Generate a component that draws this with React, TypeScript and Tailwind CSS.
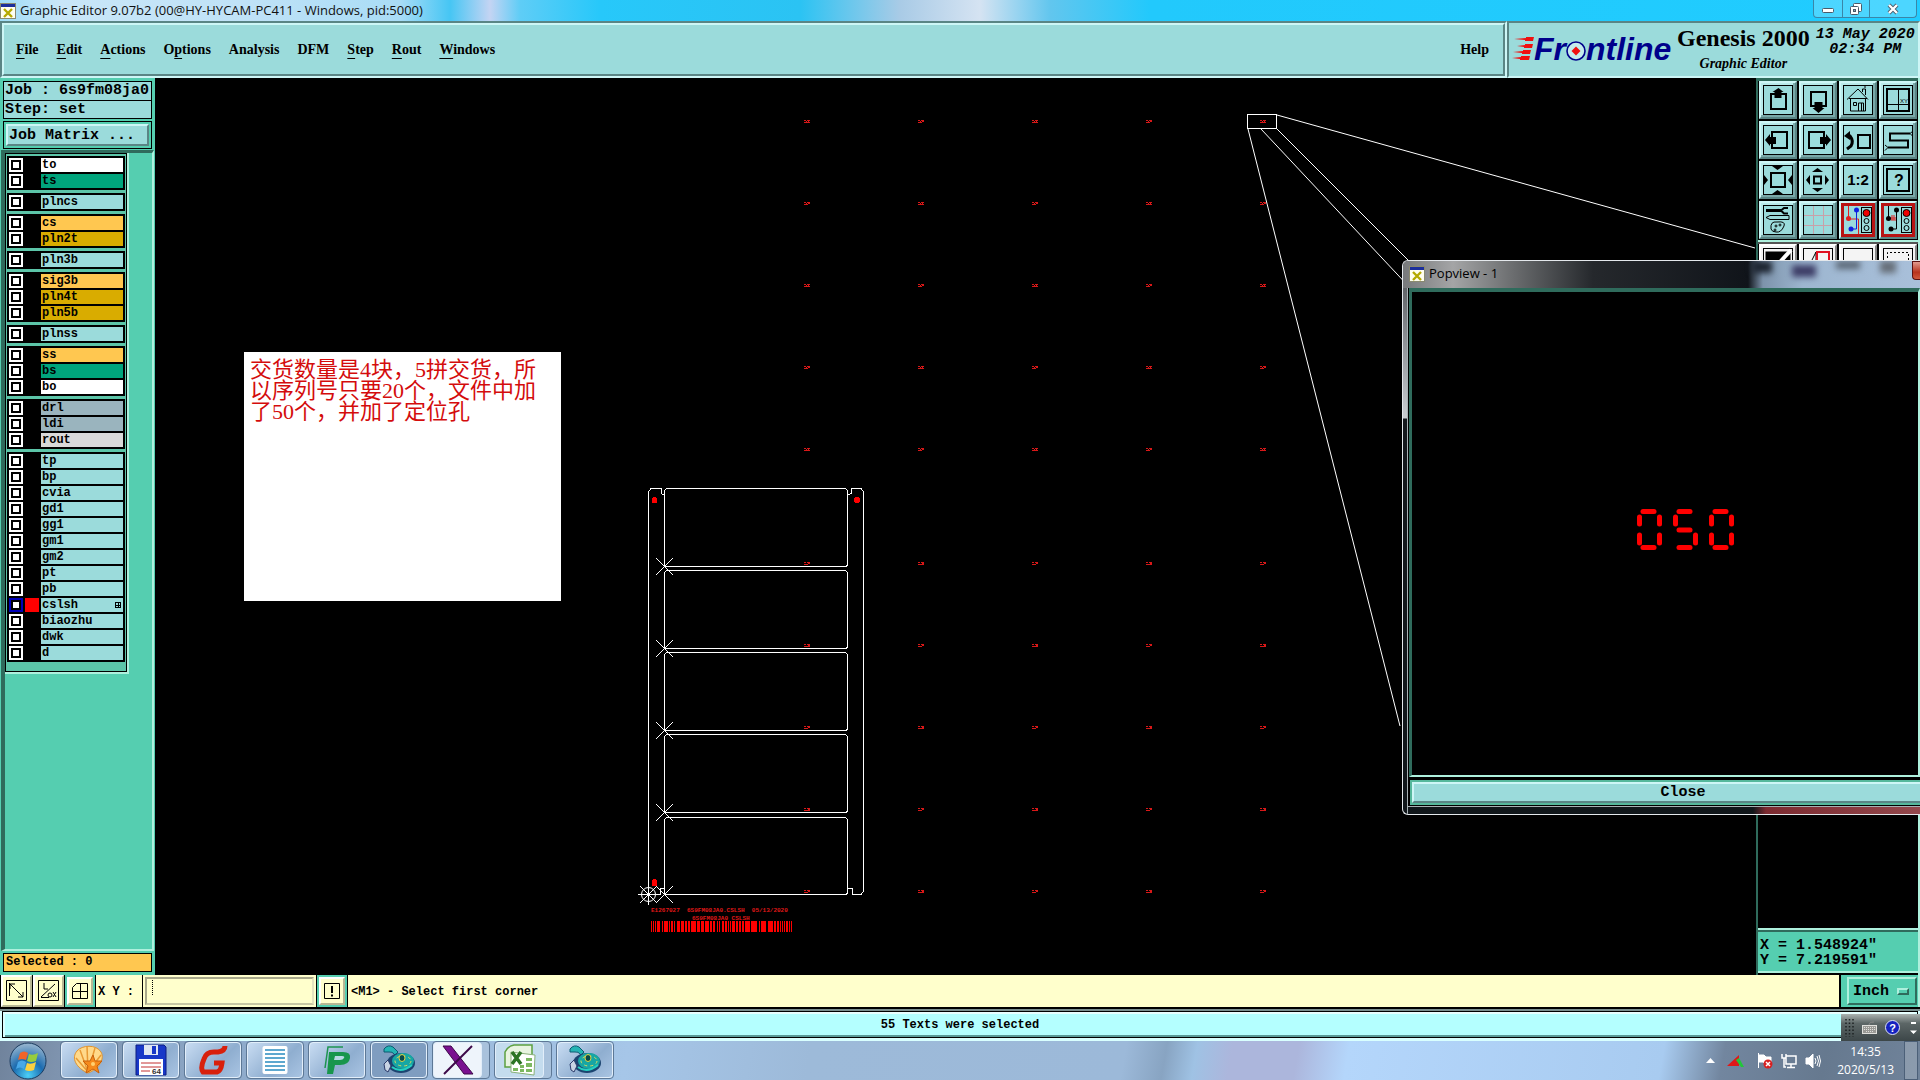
import React, { useState } from "react";

const raised =
  "border-2 border-t-[#cdf6f6] border-l-[#cdf6f6] border-b-[#5a8585] border-r-[#5a8585]";
const sunken =
  "border-2 border-t-[#5a8585] border-l-[#5a8585] border-b-[#cdf6f6] border-r-[#cdf6f6]";
const mono = "font-['Liberation_Mono',monospace]";
const serif = "font-['Liberation_Serif',serif]";
const ui = "font-['Open_Sans','Noto_Sans',sans-serif]";

type Layer = { name: string; color: string };

const AQUA = "bg-[#9bdbdb]";
const ORANGE = "bg-[#ffc750]";
const GOLD = "bg-[#d9ac00]";
const GREEN = "bg-[#00a47c]";
const WHITE = "bg-white";
const STEEL = "bg-[#9ab4be]";

const layerGroups: Layer[][] = [
  [
    { name: "to", color: WHITE },
    { name: "ts", color: GREEN },
  ],
  [{ name: "plncs", color: AQUA }],
  [
    { name: "cs", color: ORANGE },
    { name: "pln2t", color: GOLD },
  ],
  [{ name: "pln3b", color: AQUA }],
  [
    { name: "sig3b", color: ORANGE },
    { name: "pln4t", color: GOLD },
    { name: "pln5b", color: GOLD },
  ],
  [{ name: "plnss", color: AQUA }],
  [
    { name: "ss", color: ORANGE },
    { name: "bs", color: GREEN },
    { name: "bo", color: WHITE },
  ],
  [
    { name: "drl", color: STEEL },
    { name: "ldi", color: STEEL },
    { name: "rout", color: "bg-[#d9d9d9]" },
  ],
  ["tp", "bp", "cvia", "gd1", "gg1", "gm1", "gm2", "pt", "pb", "cslsh", "biaozhu", "dwk", "d"].map(
    (name) => ({ name, color: AQUA })
  ),
];

// [text before, underlined letter, text after]
const menus = [
  ["", "F", "ile"],
  ["", "E", "dit"],
  ["", "A", "ctions"],
  ["O", "p", "tions"],
  ["Analysis", "", ""],
  ["DFM", "", ""],
  ["", "S", "tep"],
  ["", "R", "out"],
  ["", "W", "indows"],
];

const XIcon: React.FC = () => (
  <svg width="16" height="16" viewBox="0 0 16 16" shapeRendering="crispEdges">
    <rect x="0.5" y="0.5" width="15" height="15" fill="#fffef0" stroke="#8a8a70" />
    <rect x="1" y="1" width="14" height="3" fill="#1c2f9c" />
    <path d="M4 6l8 8M12 6l-8 8" stroke="#b5a900" strokeWidth="2.4" shapeRendering="auto" />
  </svg>
);

const TitleBar: React.FC = () => (
  <div className="flex h-[21px] items-start justify-between overflow-hidden bg-[linear-gradient(90deg,#9fdcf6_0px,#c9e6f8_60px,#bfe2f7_250px,#a9dcf6_400px,#46c6f4_450px,#c4d4f3_490px,#5fcdf6_520px,#27c8fa_600px,#2bc3f3_800px,#a9cbe6_900px,#d5e3f2_980px,#62c6ee_1050px,#22c9fc_1150px,#20ccff_1900px)]">
    <div className={`flex h-[21px] items-center gap-1 pt-px text-[13px] text-[#111] ${ui}`}>
      <XIcon />
      <span>Graphic Editor 9.07b2 (00@HY-HYCAM-PC411 - Windows, pid:5000)</span>
    </div>
    <div className="mr-[3px] flex h-[18px] overflow-hidden rounded-b border border-t-0 border-[#3a86a8] bg-white/20">
      <button aria-label="Minimize" className="flex w-[29px] items-center justify-center border-r border-[#3a86a8]">
        <svg width="14" height="12"><rect x="1.5" y="5.5" width="11" height="4" rx="1" fill="#fff" stroke="#4a5a6a" /></svg>
      </button>
      <button aria-label="Restore" className="flex w-[27px] items-center justify-center border-r border-[#3a86a8]">
        <svg width="14" height="14" fill="#fff" stroke="#4a5a6a">
          <rect x="4.5" y="1.5" width="8" height="8" rx="1" />
          <rect x="1.5" y="4.5" width="8" height="8" rx="1" />
          <rect x="4.5" y="7.5" width="2" height="2" fill="#8ab" />
        </svg>
      </button>
      <button aria-label="Close window" className="flex w-[46px] items-center justify-center">
        <svg width="14" height="12">
          <path d="M3 2l8 8M11 2l-8 8" stroke="#4a5a6a" strokeWidth="4" />
          <path d="M3 2l8 8M11 2l-8 8" stroke="#fff" strokeWidth="2.4" />
        </svg>
      </button>
    </div>
  </div>
);

const Header: React.FC = () => (
  <header className="flex h-[57px] bg-[#9bdbdb] text-black">
    <div className={`flex flex-1 ${sunken}`}>
      <nav className={`flex flex-1 items-center justify-between pr-3.5 pl-3 text-[14px] font-bold ${serif} ${raised}`}>
        <div className="flex gap-[18px]">
          {menus.map(([pre, key, post]) => (
            <button key={pre + key + post} className="leading-4">
              {pre}
              <span className="underline decoration-1 underline-offset-4">{key}</span>
              {post}
            </button>
          ))}
        </div>
        <button className="leading-4">Help</button>
      </nav>
    </div>
    <div className={`flex w-[413px] items-start pl-[3px] ${sunken}`}>
      <div className="flex items-center pt-[10px] text-[32px] leading-8 font-bold italic text-[#00008b] font-['Liberation_Sans',sans-serif]">
        <svg width="22" height="32" viewBox="0 0 22 32" fill="#f01010">
          <path d="M2 6l12-1v-1h8l-1 4h-8v-1zM5 13l8-1v-1h8l-1 4h-8v-1zM1 19l10-1v-1h8l-1 4h-8v-1zM0 25l9-1v-1h9l-1 4h-9v-1z" />
        </svg>
        <span>Fr</span>
        <svg width="20" height="32" viewBox="0 0 20 32">
          <circle cx="10" cy="18" r="9" fill="#c4ecec" stroke="#00008b" strokeWidth="1.6" />
          <path d="M10 13.500l4.500 4.500-4.500 4.500-4.500-4.500z" fill="#f01010" />
        </svg>
        <span>ntline</span>
      </div>
      <div className={`ml-[3px] flex w-[138px] flex-col items-center font-bold ${serif}`}>
        <span className="pt-px text-[24px] leading-7">Genesis 2000</span>
        <span className="pt-1 text-[14px] leading-4 italic">Graphic Editor</span>
      </div>
      <div className={`flex flex-1 flex-col items-center pt-1 text-[15px] leading-[15px] font-bold italic ${mono}`}>
        <span>13 May 2020</span>
        <span>02:34 PM</span>
      </div>
    </div>
  </header>
);

const LayerRow: React.FC<{ layer: Layer }> = ({ layer }) => {
  const active = layer.name === "cslsh";
  const [checked, setChecked] = useState(active);
  const id = `layer-${layer.name}`;
  return (
    <div className="flex h-[14px] gap-0.5">
      <input
        id={id}
        type="checkbox"
        checked={checked}
        onChange={() => setChecked(!checked)}
        className="size-[14px] appearance-none border-2 border-white bg-white shadow-[inset_0_0_0_2px_#000] checked:border-[#0000b8]"
      />
      <span className={active ? "w-[14px] bg-[#ff0000]" : "w-[14px] bg-black"} />
      <label
        htmlFor={id}
        className={`flex flex-1 items-center justify-between pl-px text-[12px] leading-[14px] font-bold text-black ${layer.color}`}
      >
        {layer.name}
        {active && (
          <svg width="7" height="6" viewBox="0 0 7 6" shapeRendering="crispEdges" className="mr-px">
            <path d="M0.500 0.500h5v5h-5zM3 0v6M0 3h6" fill="none" stroke="#000" />
          </svg>
        )}
      </label>
    </div>
  );
};

const Sidebar: React.FC = () => (
  <aside className={`flex w-[155px] flex-col bg-[#55ceb0] px-[3px] pt-[3px] pb-[3px] text-[15px] font-bold text-black ${mono}`}>
    <div className="border border-black bg-[#9bdbdb] px-px leading-[18px] whitespace-nowrap">Job : 6s9fm08ja0</div>
    <div className="border border-t-0 border-black bg-[#9bdbdb] px-px leading-[17px]">Step: set</div>
    <div className="mt-0.5 border border-black p-0.5">
      <button className={`block h-[22px] w-full bg-[#9bdbdb] pt-px pl-px text-left leading-[17px] ${raised}`}>Job Matrix ...</button>
    </div>
    <div className="-mx-0.5 mt-px flex-1 border-t-[3px] border-r-2 border-b-2 border-l-4 border-t-[#2f6b5c] border-l-[#2f6b5c] border-r-[#aef0dd] border-b-[#aef0dd]">
      <div className="w-[124px] border-r-2 border-b-2 border-[#aef0dd]">
        <div className="flex flex-col gap-[3px] border border-black bg-[#5cc5a8] px-px pt-0.5 pb-[9px]">
          {layerGroups.map((group) => (
            <div key={group[0].name} className="flex flex-col gap-0.5 bg-black p-0.5">
              {group.map((l) => (
                <LayerRow key={l.name} layer={l} />
              ))}
            </div>
          ))}
        </div>
      </div>
    </div>
    <div className="mt-0.5 border border-black bg-[#ffc750] pl-0.5 text-[12px] leading-[17px]">Selected : 0</div>
  </aside>
);

const boards = [488.5, 570.5, 652.5, 734.5, 817.5];
const boardEnds = [566.5, 648.5, 730.5, 812.5, 894.5];
const serialCols = [804, 918, 1032, 1146, 1260];
const serialRows = [120, 202, 284, 366, 448, 562, 644, 726, 808, 890];
const bars = [
  1, 1, 1, 1, 1, 1, 3, 2, 1, 1, 4, 1, 1, 1, 2, 1, 1, 2, 3, 1, 3, 1, 2, 1, 2, 1, 5, 1, 3, 1, 3, 1, 4, 1, 2, 1, 2, 2, 1, 1, 1, 2, 2,
  1, 2, 1, 1, 1, 1, 1, 3, 1, 2, 1, 2, 1, 2, 1, 5, 1, 6, 2, 1, 1, 5, 2, 5, 1, 2, 1, 2, 1, 1, 1, 1, 1, 1, 1, 2, 1, 1, 1, 1,
];

const Barcode: React.FC = () => {
  let x = 651;
  return (
    <g fill="#ff0000" stroke="none">
      {bars.map((w, i) => {
        const rect = i % 2 === 0 ? <rect key={i} x={x} y={921} width={w} height={11} /> : null;
        x += w;
        return rect;
      })}
    </g>
  );
};

// CAD view, drawn in screen units
const Drawing: React.FC = () => (
  <svg className="absolute inset-0 h-full w-full" fill="none" stroke="#fff" shapeRendering="crispEdges">
    <g transform="translate(-155 -78)">
      {boards.map((y, i) => (
        <g key={y}>
          <rect x="664.5" y={y} width="183" height={boardEnds[i] - y} rx="3" />
          <path d={`M656 ${boardEnds[i] - 8.5}l17 17m0 -17l-17 17`} shapeRendering="auto" />
        </g>
      ))}
      <path d="M664.500 494.500h-2l-1.500-1v-5h-10l-2.500 3v403h12v-6h4M847.500 494.500h2l1.500-1v-5h10l2.500 3v400l-2.500 3h-9v-6h-4" />
      <g shapeRendering="auto">
        <circle cx="648.5" cy="894.5" r="7" />
        <path d="M638 894.500h21M648.500 884v21M640 886l17 17m0-17l-17 17" />
      </g>
      <g fill="#ff0000" stroke="none">
        <path d="M652 498h1v-1h3v1h1v5h-5zM652 880h1v-1h3v1h1v6h-5z" />
        <circle cx="857" cy="500" r="3" />
      </g>
      <g fill="#d81818" stroke="none">
        {serialRows.map((y, r) =>
          serialCols.map((x, c) => (
            <g key={`${x}-${y}`}>
              <rect x={x} y={y} width={2} height={1} />
              <rect x={x + 3} y={y} width={3} height={1} />
              <rect x={x + (r > 4 ? 5 : 2)} y={y + 1} width={1} height={1} />
              <rect x={x + 4} y={y + 1} width={(r + c) % 2 ? 2 : 1} height={1} />
              <rect x={x} y={y + 2} width={3} height={1} />
              <rect x={x + 3} y={y + 2} width={(r + c) % 2 ? 1 : 3} height={1} />
            </g>
          ))
        )}
      </g>
      <g fill="#e01818" stroke="none" fontFamily="Liberation Mono, monospace" fontSize="6" fontWeight="bold">
        <text x="651" y="912">{"E1267027\u00a0\u00a06S9FM08JA0.CSLSH\u00a0\u00a005/13/2020"}</text>
        <text x="692" y="920">6S9FM08JA0 CSLSH</text>
      </g>
      <Barcode />
      <rect x="1247.5" y="114.5" width="29" height="14" />
      <g shapeRendering="auto">
        <path d="M1277 115L1755 248M1248 129L1400 726M1261 129L1412 290M1277 129L1420 272" />
      </g>
    </g>
  </svg>
);

const frame = <rect x="0.5" y="0.5" width="29" height="29" />;

const tools: { label: string; art: React.ReactNode; hot?: boolean }[] = [
  {
    label: "Pan up",
    art: <><rect x="8" y="9" width="15" height="15" strokeWidth="2" /><path d="M15.500 3l5 4h-2v6h-7v-6h-2z" fill="#000" stroke="none" /></>,
  },
  {
    label: "Pan down",
    art: <><rect x="8" y="7" width="15" height="14" strokeWidth="2" /><path d="M15.500 28l-6-5h2v-6h8v6h2z" fill="#000" stroke="none" /></>,
  },
  {
    label: "Home",
    art: <><path d="M4 14.500L15 4l10 10.500M7.500 13v13h15v-13M6 13.500h18M10.500 17.500h3v3h-3zM15.500 26v-8h5v8M18.500 18v8M19.500 7V4h3v6M22 3v-2" /></>,
  },
  {
    label: "Coordinates",
    art: <><rect x="4" y="4" width="22" height="22" strokeWidth="2" /><path d="M15.500 4v22M4 19.500h22" /><text x="17" y="18" fontSize="6" stroke="none" fill="#000">XY</text></>,
  },
  {
    label: "Pan left",
    art: <><rect x="9" y="7" width="15" height="16" strokeWidth="2" /><path d="M2 15l5-6v3h6v7h-6v2z" fill="#000" stroke="none" /></>,
  },
  {
    label: "Pan right",
    art: <><rect x="6" y="7" width="15" height="16" strokeWidth="2" /><path d="M28 15l-5-6v3h-6v7h6v2z" fill="#000" stroke="none" /></>,
  },
  {
    label: "Previous view",
    art: <><rect x="15" y="10" width="12" height="13" strokeWidth="2" /><path d="M4 11h3q4 5 1 10l-4 3" strokeWidth="3" /><path d="M1 11l6-5v9z" fill="#000" stroke="none" /></>,
  },
  {
    label: "Serpentine",
    art: <><path d="M27 8.500H7v7h18v7H5" strokeWidth="2" /><path d="M30 6l-3 2.500 3 3M2 20l3 2.500-3 3" /></>,
  },
  {
    label: "Zoom in",
    art: <><rect x="8" y="8" width="14" height="14" strokeWidth="2" /><path d="M9 1h11l-5.500 4zM9 29h11l-5.500-4zM1 10v10l4-5zM29 10v10l-4-5z" fill="#000" stroke="none" /></>,
  },
  {
    label: "Zoom out",
    art: <><rect x="11" y="11.500" width="7" height="7" strokeWidth="2" /><path d="M9 7h11l-5.500-4zM9 23h11l-5.500 4zM7 10v10l-4-5zM22 10v10l4-5z" fill="#000" stroke="none" /></>,
  },
  {
    label: "Scale",
    art: <text x="15" y="20" textAnchor="middle" fontSize="15" fontWeight="bold" stroke="none" fill="#000">1:2</text>,
  },
  {
    label: "Query",
    art: <><rect x="4" y="4" width="22" height="22" strokeWidth="2" /><text x="16" y="21" textAnchor="middle" fontSize="16" fontWeight="bold" stroke="none" fill="#000">?</text></>,
  },
  {
    label: "Setup",
    art: <><path d="M3 5.500h15" strokeWidth="3" /><path d="M25 3h-4l-3 2.500 3 3h4" strokeWidth="2" /><path d="M3 12.500l4-2h19v4h-19zM8 24q-1-8 6-7 9-1 7 4-3 7-8 6-4 0-5-3z" /><circle cx="13" cy="21" r="1" /><circle cx="17" cy="20" r="1" /><circle cx="12" cy="25" r="1" /></>,
  },
  {
    label: "Grid",
    art: <path d="M10.500 1v28M20.500 1v28M1 10.500h28M1 20.500h28" stroke="#c9a0a8" />,
  },
  {
    label: "Net online",
    hot: true,
    art: (
      <>
        <path d="M5.500 1v13h10v15" stroke="#e02020" />
        <path d="M13.500 4v20h-5" stroke="#1020e0" />
        <g stroke="none"><circle cx="5.500" cy="13.500" r="2.500" fill="#e02020" /><circle cx="13.500" cy="5" r="2.500" fill="#1020e0" /><circle cx="8" cy="24" r="2.500" fill="#1020e0" /></g>
        <rect x="18.500" y="2.500" width="10" height="25" /><circle cx="23.500" cy="8" r="3.500" fill="#f00000" /><circle cx="23.500" cy="16" r="2.500" /><circle cx="23.500" cy="23" r="2.500" />
      </>
    ),
  },
  {
    label: "Net check",
    hot: true,
    art: (
      <>
        <path d="M5.500 1v13M13.500 4v20h-5" />
        <path d="M7 13h6M8 15h5M9 10v5M11 10v5" stroke="#e02020" />
        <g stroke="none" fill="#000"><circle cx="5.500" cy="13.500" r="2.500" /><circle cx="13.500" cy="5" r="2.500" /><circle cx="8" cy="24" r="2.500" /></g>
        <rect x="18.500" y="2.500" width="10" height="25" /><circle cx="23.500" cy="8" r="3.500" fill="#f00000" /><circle cx="23.500" cy="16" r="2.500" /><circle cx="23.500" cy="23" r="2.500" />
      </>
    ),
  },
];

const editTools: { label: string; art: React.ReactNode }[] = [
  { label: "Copy feature", art: <><rect x="3" y="4" width="24" height="14" fill="#000" /><path d="M17 14L28 2" stroke="#fff" strokeWidth="4" /></> },
  { label: "Move feature", art: <><path d="M6 18L13 4v14" /><rect x="14" y="4" width="12" height="12" stroke="#e01020" strokeWidth="2" /></> },
  { label: "Line", art: <path d="M4 14.500h22" /> },
  { label: "Select box", art: <path d="M4.500 14v-9.500h21v9.500" strokeDasharray="2 2" /> },
];

const Toolbar: React.FC = () => (
  <aside className={`flex w-[164px] flex-col border-r-2 border-l-2 border-l-[#2f6b5c] border-r-[#aef0dd] bg-black text-black ${mono}`}>
    <div className="grid grid-cols-[repeat(4,38px)] gap-0.5 border-t-[3px] border-b-2 border-t-[#2f6b5c] border-b-[#aef0dd] pb-px pl-px">
      {tools.map((t) => (
        <button
          key={t.label}
          aria-label={t.label}
          className={`flex h-[38px] items-center justify-center bg-[#9bdbdb] ${raised} ${t.hot ? "shadow-[inset_0_0_0_3px_#b81414]" : "shadow-[inset_-2px_-2px_0_#79a8a8,inset_2px_2px_0_#b8eaea]"}`}
        >
          <svg width="30" height="30" viewBox="0 0 30 30" fill="none" stroke="#000" className="font-['Liberation_Sans',sans-serif]">
            {t.hot ? null : frame}
            {t.art}
          </svg>
        </button>
      ))}
    </div>
    <div className="grid grid-cols-[repeat(4,38px)] gap-0.5 border-t-2 border-[#555] pl-px">
      {editTools.map((t) => (
        <button key={t.label} aria-label={t.label} className="flex h-[38px] items-center justify-center border-2 border-t-white border-l-white border-r-[#888] border-b-[#888] bg-[#f4f4f4]">
          <svg width="30" height="30" viewBox="0 0 30 30" fill="none" stroke="#000">
            {frame}
            {t.art}
          </svg>
        </button>
      ))}
    </div>
    <div className="flex-1" />
    <div className="border-t-2 border-[#aef0dd]">
      <div className="h-[43px] border-t-2 border-b-2 border-t-[#2f6b5c] border-b-[#aef0dd] bg-[#55ceb0] pt-1.5 pl-0.5 text-[15px] leading-[15px] font-bold">
        <p>X = 1.548924"</p>
        <p>Y = 7.219591"</p>
      </div>
    </div>
    <div className="h-0.5" />
  </aside>
);

const segments: Record<string, string> = {
  a: "M6 2.500h11",
  b: "M22.500 8v7",
  c: "M22.500 26v8",
  d: "M6 38.500h11",
  e: "M2.500 26v8",
  f: "M2.500 8v7",
  g: "M6 21h11",
};
const readout = ["abcdef", "afgcd", "abcdef"];

const Popview: React.FC = () => (
  <section className={`absolute top-[182px] right-0 flex h-[555px] w-[518px] flex-col overflow-hidden rounded-l-md border border-r-0 border-[#e4e8ec] bg-[linear-gradient(180deg,#4a4d50_0px,#8d9196_80px,#c8ccd0_157px,#14181c_158px,#10161a_100%)]`}>
    <div className="flex h-[27px] items-start justify-between bg-[linear-gradient(90deg,#77797b_0px,#a4a5a6_50px,#6b6d6f_110px,#25282c_190px,#10141a_345px,#7d93ab_360px,#9db6d0_400px,#a9c0da_517px)]">
      <div className={`flex h-[26px] items-center gap-1 pl-1.5 text-[13px] text-black ${ui}`}>
        <XIcon />
        <h2>Popview - 1</h2>
      </div>
      <div className="flex">
        <div className="flex gap-5 pr-4 blur-[3px]">
          <span className="h-3 w-5 bg-[#1c2430]" />
          <span className="mt-1 h-3 w-6 bg-[#3c3c66]" />
          <span className="h-2 w-6 bg-[#5a6674]" />
          <span className="h-3 w-4 bg-[#666e78]" />
        </div>
        <button aria-label="Close Popview" className="h-[19px] w-2 rounded-bl border border-r-0 border-[#5c1010] bg-[linear-gradient(180deg,#e29a8e,#b8321c_60%,#d0583c)]" />
      </div>
    </div>
    <div className="ml-1 flex flex-1 flex-col border-l border-[#a8b0b4] bg-black pl-px">
      <div className="flex flex-1 items-center justify-center border-t-4 border-r-2 border-b-2 border-l-[3px] border-t-[#2f6b5c] border-l-[#2f6b5c] border-r-[#aef0dd] border-b-[#aef0dd] pb-[7px] pl-[42px]">
        <svg width="98" height="42" viewBox="0 0 98 42" stroke="#ff0000" strokeWidth="5" strokeLinecap="round" role="img" aria-label="050">
          {readout.map((on, i) => (
            <g key={i} transform={`translate(${i * 36} 0)`}>
              {on.split("").map((s) => (
                <path key={s} d={segments[s]} />
              ))}
            </g>
          ))}
        </svg>
      </div>
      <div className="h-[29px] overflow-hidden pt-0.5">
        <div className="w-[548px] border border-black bg-[#55b89c] p-0.5">
          <button className={`block h-[21px] w-full bg-[#9bdbdb] text-center text-[15px] leading-[17px] font-bold text-black ${mono} ${raised}`}>
            Close
          </button>
        </div>
      </div>
    </div>
    <div className="ml-1 h-2 border-t border-l border-[#a8b0b4] bg-[linear-gradient(90deg,#10161a_0px,#10161a_345px,#7c2a30_358px,#93484c_100%)]" />
  </section>
);

const creamBtn = "border-2 border-t-white border-l-white border-r-[#b8b894] border-b-[#b8b894] bg-[#ffffcc]";

const CommandBar: React.FC = () => {
  const [xy, setXy] = useState("");
  return (
    <div className={`flex h-[34px] gap-px border-b-2 border-black bg-black pl-px text-[12px] font-bold text-black ${mono}`}>
      <button aria-label="Absolute mode" className={`flex w-[31px] items-center justify-center ${creamBtn}`}>
        <svg width="22" height="22" viewBox="0 0 22 22" fill="none" stroke="#000">
          <path d="M0.500 0.500h20v20h-20zM3.500 3v13M4 4l13 13M4 9V4h5M17 12v5h-5" />
        </svg>
      </button>
      <button aria-label="Angle mode" className={`flex w-[31px] items-center justify-center ${creamBtn}`}>
        <svg width="22" height="22" viewBox="0 0 22 22" fill="none" stroke="#000">
          <path d="M0.500 0.500h20v20h-20zM3 17.500h8M3 17L17 4M6 3v6h4" />
          <circle cx="12" cy="15" r="2" />
          <path d="M15 12l3 5M18 12l-3 5" />
        </svg>
      </button>
      <div className="bg-[#55ceb0] p-0.5">
        <button aria-label="Snap to grid" className={`flex h-full w-[26px] items-center justify-center ${creamBtn}`}>
          <svg width="18" height="18" viewBox="0 0 18 18" fill="none" stroke="#000">
            <path d="M1.500 5.500l4-4h11v15h-15zM9.500 1v15M1 9.500h15" />
          </svg>
        </button>
      </div>
      <label htmlFor="xy" className="flex w-[46px] items-center bg-[#ffffcc] pt-px pl-0.5">X Y :</label>
      <div className="bg-[#ffffcc] p-0.5">
        <input
          id="xy"
          value={xy}
          onChange={(e) => setXy(e.target.value)}
          className="h-[28px] w-[169px] border-2 border-t-[#a8a88a] border-l-[#a8a88a] border-r-[#e4e4c0] border-b-[#c8c8a4] bg-[#ffffcc] bg-[repeating-linear-gradient(180deg,#000_0px,#000_1px,transparent_1px,transparent_2px)] bg-[length:1px_15px] bg-[position:5px_1px] bg-no-repeat pl-2 outline-none"
        />
      </div>
      <div className="bg-[#55ceb0] p-0.5">
        <button aria-label="Interrupt" className={`flex h-full w-[26px] items-center justify-center ${creamBtn}`}>
          <svg width="18" height="18" viewBox="0 0 18 18" fill="none" stroke="#000">
            <path d="M1.500 1.500h15v15h-15z" />
            <path d="M9 4v7M9 12.500v2" strokeWidth="2" />
          </svg>
        </button>
      </div>
      <p className="flex flex-1 items-center bg-[#ffffcc] pt-px pl-[3px]">&lt;M1&gt; - Select first corner</p>
      <div className="ml-px w-[79px] border-r-2 border-[#aef0dd] bg-[#55ceb0] py-0.5 pr-px pl-1.5">
        <label className="flex h-[28px] items-center gap-2 border-2 border-t-[#aef0dd] border-l-[#aef0dd] border-r-[#2f6b5c] border-b-[#2f6b5c] pl-1">
          <select aria-label="Units" className="w-9 appearance-none bg-transparent pt-0.5 text-[15px] outline-none">
            <option>Inch</option>
            <option>MM</option>
          </select>
          <span className="h-[7px] w-3 border-2 border-t-[#aef0dd] border-l-[#aef0dd] border-r-[#2f6b5c] border-b-[#2f6b5c]" />
        </label>
      </div>
    </div>
  );
};

const StatusBar: React.FC = () => (
  <div className={`relative h-8 border-t-2 border-[#7b8f8f] bg-[#d9ffff] ${mono}`}>
    <div className="mx-0.5 h-[27px] border border-black bg-[#d9ffff] px-0.5">
      <p className="h-full border-t-2 border-b-2 border-t-[#e8ffff] border-b-[#5a9a98] bg-[#b4ffff] pt-0.5 text-center text-[12px] leading-[19px] font-bold text-black">
        55 Texts were selected
      </p>
    </div>
    <div className="absolute right-0 bottom-0 flex h-[27px] w-[79px] items-center gap-2 bg-[linear-gradient(180deg,#aab2b0_0%,#5c6666_35%,#3c4648_100%)] pl-1">
      <svg width="9" height="18" viewBox="0 0 9 18" stroke="#1c2022" strokeWidth="1.500" strokeDasharray="1.500 2">
        <path d="M1 0v18M4.500 0v18M8 0v18" />
      </svg>
      <svg width="15" height="14" viewBox="0 0 15 14" fill="none" stroke="#e0e0dc">
        <path d="M7 4q0-3 5-3" stroke="#888" />
        <rect x="0.500" y="4.500" width="14" height="8" fill="#9a9a96" />
        <path d="M2 6.500h11M2 8.500h11M4 10.500h7" strokeDasharray="1 1" />
      </svg>
      <svg width="15" height="15" viewBox="0 0 15 15">
        <circle cx="7.500" cy="7.500" r="7" fill="#1522c0" stroke="#dfe4f8" />
        <text x="7.500" y="11.500" textAnchor="middle" fontSize="11" fontWeight="bold" fill="#fff" fontFamily="Liberation Sans, sans-serif">?</text>
      </svg>
      <svg width="7" height="14" viewBox="0 0 7 14" fill="#fff" className="ml-0.5">
        <path d="M1 1h5v2H1zM0 9.500h7L3.500 13z" />
      </svg>
    </div>
  </div>
);

const Gecko: React.FC = () => (
  <svg width="34" height="32" viewBox="0 0 34 32">
    <path d="M2 5q4-5 9-2l5 5-3 3q-3-4-6-3l-5 0z" fill="#24b4b4" stroke="#0a5a70" />
    <ellipse cx="19" cy="19" rx="14" ry="10" fill="#1c4470" />
    <ellipse cx="21" cy="17" rx="11" ry="8" fill="#17a6a4" />
    <ellipse cx="21" cy="17" rx="8" ry="5" fill="none" stroke="#d8d860" strokeDasharray="3 3" />
    <ellipse cx="20" cy="14" rx="3" ry="3.500" fill="#0a4a4a" stroke="#e0d848" />
    <path d="M10 23q9 7 20-2" stroke="#26d0c0" fill="none" strokeWidth="2" />
    <path d="M2 20l4-4 3 6-3 6-3-2z" fill="#c8d4e4" stroke="#2c3c6c" />
  </svg>
);

const apps: { label: string; icon: React.ReactNode; look?: string; stacked?: boolean }[] = [
  {
    label: "Shell",
    icon: (
      <svg width="34" height="32" viewBox="0 0 34 32">
        <path d="M16 29C4 24-1 14 5 7 10 1 24 0 29 8c4 7-2 17-13 21z" fill="#ffd98a" stroke="#e0932c" />
        <path d="M16 28L4 14M16 28L8 6M16 28L15 2M16 28L23 4M16 28L29 11" stroke="#e89a34" strokeWidth="1.500" />
        <path d="M21 11l2 6 7 0-5 5 2 7-6-4-7 4 2-7-5-5 7 0z" fill="#f58a1c" stroke="#c8600c" />
        <circle cx="21" cy="20" r="2" fill="#ffd070" />
      </svg>
    ),
  },
  {
    label: "Save 64",
    icon: (
      <svg width="32" height="32" viewBox="0 0 32 32">
        <path d="M1 1h28l2 2v28H1z" fill="#1838c8" stroke="#0c1c80" />
        <rect x="9" y="1" width="14" height="10" fill="#dfe6f2" />
        <rect x="17" y="2" width="4" height="8" fill="#1838c8" />
        <rect x="4" y="15" width="24" height="16" fill="#fff" />
        <path d="M6 19h20M6 23h20M6 27h9" stroke="#c43030" />
        <text x="17" y="30" fontSize="8" fontWeight="bold" fill="#333" fontFamily="Liberation Sans, sans-serif">64</text>
      </svg>
    ),
  },
  {
    label: "Genesis",
    icon: (
      <svg width="30" height="30" viewBox="0 0 30 30" fill="none">
        <path d="M27 1q0 5-7 6h-4Q8 7 6 14q-4 9-1 13h14q4-1 5-9h-8" stroke="#d8200c" strokeWidth="5" />
      </svg>
    ),
  },
  {
    label: "Notepad",
    icon: (
      <svg width="26" height="30" viewBox="0 0 26 30">
        <rect x="0.500" y="1" width="25" height="28" rx="2" fill="#fff" />
        <path d="M3 5h20M3 9h20M3 13h20M3 17h20M3 21h20M3 25h20" stroke="#2a8cc0" strokeWidth="1.500" />
      </svg>
    ),
  },
  {
    label: "Planner",
    icon: (
      <svg width="32" height="32" viewBox="0 0 32 32" fill="none">
        <path d="M4 24L7 3h15" stroke="#1c9450" strokeWidth="1.500" />
        <path d="M8 8h14q8 0 7 6-1 7-10 7h-5l-2 9H6z" fill="#18964c" />
        <path d="M14 12h7q3 0 2 2-1 2-4 2h-6z" fill="#b8d8e4" />
      </svg>
    ),
  },
  { label: "Gecko", icon: <Gecko />, look: "bg-[#7f9dc0]" },
  {
    label: "Exceed",
    look: "bg-[#eef4fb]",
    stacked: true,
    icon: (
      <svg width="32" height="30" viewBox="0 0 32 30">
        <path d="M1 1h8l22 28h-9z" fill="#7a1090" stroke="#3c0848" />
        <path d="M30 1L2 29" stroke="#3c0848" strokeWidth="2" />
      </svg>
    ),
  },
  {
    label: "Excel",
    stacked: true,
    look: "bg-[#c4dcee]",
    icon: (
      <svg width="32" height="32" viewBox="0 0 32 32">
        <path d="M1 8q3-6 9-7h18v22H1z" fill="#e8f4e0" stroke="#5ca040" strokeWidth="1.500" />
        <path d="M7 8l24 3-1 20-23-3z" fill="#fff" stroke="#88b078" />
        <path d="M16 21h4v3h-4zM22 14h6v3h-6zM22 19h6v4h-6zM22 25h6v3h-6zM9 24h5v3H9zM16 25h4v3h-4z" fill="#7cb860" />
        <path d="M8 8l9 12M17 8L8 20" stroke="#2c7424" strokeWidth="3.500" />
      </svg>
    ),
  },
  { label: "Gecko 2", icon: <Gecko /> },
];

const Taskbar: React.FC = () => (
  <footer className={`flex h-[39px] items-stretch justify-between bg-[linear-gradient(100deg,#70839c_0px,#7e93ae_60px,#8fabcb_240px,#a6c6e8_620px,#9dbad9_800px,#9cb9d9_1110px,#88a4c2_1150px,#9fc2e4_1180px,#acb6dc_1215px,#acb6dc_1280px,#b4d6fb_1330px,#a8cbf0_1640px,#72869f_1700px,#66798f_1800px,#70839a_100%)] ${ui}`}>
    <div className="flex gap-1">
      <button aria-label="Start" className="flex w-14 items-center justify-center">
        <svg width="38" height="38" viewBox="0 0 38 38">
          <defs>
            <radialGradient id="orb" cx="50%" cy="90%" r="85%">
              <stop offset="0" stopColor="#4cd0f8" />
              <stop offset="0.500" stopColor="#1c6cb0" />
              <stop offset="1" stopColor="#8fb0cc" />
            </radialGradient>
          </defs>
          <circle cx="19" cy="19" r="18" fill="url(#orb)" stroke="#1c3c60" />
          <path d="M11 11q4-3 8 0l-2 7q-4-2-8 0z" fill="#f06428" />
          <path d="M20 12q4 2 9-1l-2 8q-5 2-9 0z" fill="#98cc3c" />
          <path d="M9 20q4-3 8 0l-2 7q-4-3-8 0z" fill="#48a8e8" />
          <path d="M18 21q4 2 9-1l-2 8q-5 2-9 0z" fill="#fcd040" />
        </svg>
      </button>
      {apps.map((a) => (
        <button
          key={a.label}
          aria-label={a.label}
          className={`flex h-[38px] w-[58px] rounded-sm border border-[#5d7896] ${a.stacked ? "bg-[#a9c2dc] pr-[7px]" : ""}`}
        >
          <span className={`flex h-full flex-1 items-center justify-center rounded-sm border border-[#e2eefa] ${a.look ?? "bg-[linear-gradient(135deg,#c8dcf2,#8faed0_60%,#a9c4e2)]"}`}>
            {a.icon}
          </span>
        </button>
      ))}
    </div>
    <div className="flex items-center text-white">
      <div className="flex items-center gap-2 pr-4">
        <svg width="9" height="5" viewBox="0 0 9 5"><path d="M0 5l4.500-5L9 5z" fill="#fff" /></svg>
        <svg width="18" height="14" viewBox="0 0 18 14" className="ml-1">
          <path d="M0 12L12 1v11z" fill="#e01818" />
          <path d="M9 6l3-2 5 9h-3z" fill="#20c838" />
        </svg>
        <svg width="16" height="16" viewBox="0 0 16 16" className="ml-1">
          <path d="M1.500 0v15M2 2h5l2 2h5v7H8L6 9H2z" fill="#fff" stroke="#fff" />
          <circle cx="11" cy="11" r="4.500" fill="#d82020" />
          <path d="M9 9l4 4M13 9l-4 4" stroke="#fff" strokeWidth="1.500" />
        </svg>
        <svg width="16" height="16" viewBox="0 0 16 16" fill="none" stroke="#fff" strokeWidth="1.500">
          <path d="M5 3h10v8H5zM10 11v3M6 14.500h8M1 1v4h4V1M3 5v9h2" />
        </svg>
        <svg width="16" height="16" viewBox="0 0 16 16" fill="none" stroke="#fff">
          <path d="M1 5h3l4-4v14l-4-4H1z" fill="#fff" />
          <path d="M10 5q2 3 0 6M12 3q3 5 0 10M14 2q3 6 0 12" />
        </svg>
      </div>
      <div className="pr-2.5 text-center text-[12px] leading-[18px]">
        <p>14:35</p>
        <p>2020/5/13</p>
      </div>
      <button aria-label="Show desktop" className="mr-0.5 h-full w-[14px] border border-[#4c6078] bg-white/20" />
    </div>
  </footer>
);

export default function App() {
  return (
    <div className="flex min-h-screen flex-col overflow-hidden bg-black">
      <TitleBar />
      <Header />
      <main className="relative flex flex-1">
        <Sidebar />
        <div className="relative flex-1 overflow-hidden">
          <Drawing />
          <p className="absolute top-[274px] left-[89px] h-[249px] w-[317px] bg-white pt-[7px] pr-4 pl-1.5 text-[22px] leading-[21px] text-[#d40c0c] font-['Liberation_Serif','Noto_Sans_CJK_SC',serif]">
            交货数量是4块，5拼交货，所以序列号只要20个，文件中加了50个，并加了定位孔
          </p>
        </div>
        <Toolbar />
        <Popview />
      </main>
      <CommandBar />
      <StatusBar />
      <Taskbar />
    </div>
  );
}
